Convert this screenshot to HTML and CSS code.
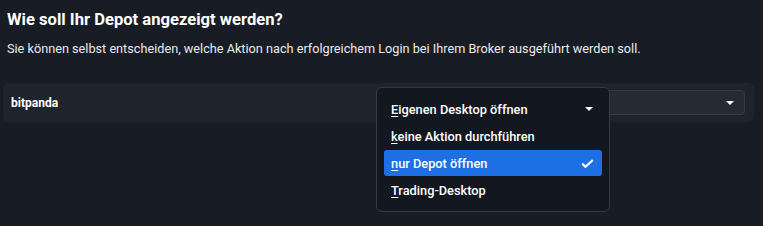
FILE: index.html
```html
<!DOCTYPE html>
<html lang="de">
<head>
<meta charset="utf-8">
<link rel="stylesheet" href="styles.css">
</head>
<body>
<div class="page">
  <h1 class="title">Wie soll Ihr Depot angezeigt werden?</h1>
  <p class="subtitle">Sie können selbst entscheiden, welche Aktion nach erfolgreichem Login bei Ihrem Broker ausgeführt werden soll.</p>
  <div class="card">
    <span class="broker">bitpanda</span>
    <div class="select">
      <svg class="caret" width="8" height="4" viewBox="0 0 8 4"><path d="M0 0h8L4 4z" fill="#fff"/></svg>
    </div>
    <div class="menu">
      <div class="item"><span><u>E</u>igenen Desktop öffnen</span><svg class="caret" width="8" height="4" viewBox="0 0 8 4"><path d="M0 0h8L4 4z" fill="#fff"/></svg></div>
      <div class="item"><span><u>k</u>eine Aktion durchführen</span></div>
      <div class="item active"><span><u>n</u>ur Depot öffnen</span><svg class="check" width="13" height="9" viewBox="0 0 13 9"><path d="M1.2 4.6l3.3 3.2L11.8 1" fill="none" stroke="#fff" stroke-width="2.2"/></svg></div>
      <div class="item"><span><u>T</u>rading-Desktop</span></div>
    </div>
  </div>
</div>
</body>
</html>
```
FILE: styles.css
```css
html, body {
  margin: 0;
  padding: 0;
  background: #181d25;
  height: 100%;
}
.page {
  font-family: Roboto, "Liberation Sans", sans-serif;
  color: #ffffff;
  padding: 10px 6px 0 7px;
}
.title {
  margin: 0;
  font-size: 16.6px;
  font-weight: 700;
  line-height: 20px;
}
.subtitle {
  margin: 11px 0 0 0;
  font-size: 12.7px;
  line-height: 16px;
  color: #e8eaee;
}
.card {
  position: relative;
  margin: 26px 0 0 -4px;
  width: 751px;
  height: 39px;
  background: #1f242c;
  border-radius: 6px;
  display: flex;
  align-items: center;
  justify-content: space-between;
  padding: 0 9px 0 8px;
  box-sizing: border-box;
}
.broker {
  font-size: 12px;
  font-weight: 700;
  color: #ffffff;
}
.select {
  width: 240px;
  height: 25px;
  box-sizing: border-box;
  border: 1px solid #353b45;
  border-radius: 4px;
  background: #252a33;
  display: flex;
  align-items: center;
  justify-content: flex-end;
  padding-right: 10px;
}
.menu {
  position: absolute;
  left: 373px;
  top: 4px;
  width: 234px;
  height: 125px;
  box-sizing: border-box;
  background: #131820;
  border: 1px solid #353a43;
  border-radius: 6px;
  padding: 8px 7px 0 7px;
  display: flex;
  flex-direction: column;
  gap: 1px;
}
.item {
  height: 26px;
  display: flex;
  align-items: center;
  justify-content: space-between;
  padding: 0 9px 0 7px;
  font-size: 12.8px;
  font-weight: 500;
  color: #ffffff;
  border-radius: 3px;
}
.item u {
  text-underline-offset: 2px;
}
.item.active {
  background: #1e6fe3;
}
.check {
  display: block;
  margin-right: -1px;
}
.caret {
  display: block;
}
```
